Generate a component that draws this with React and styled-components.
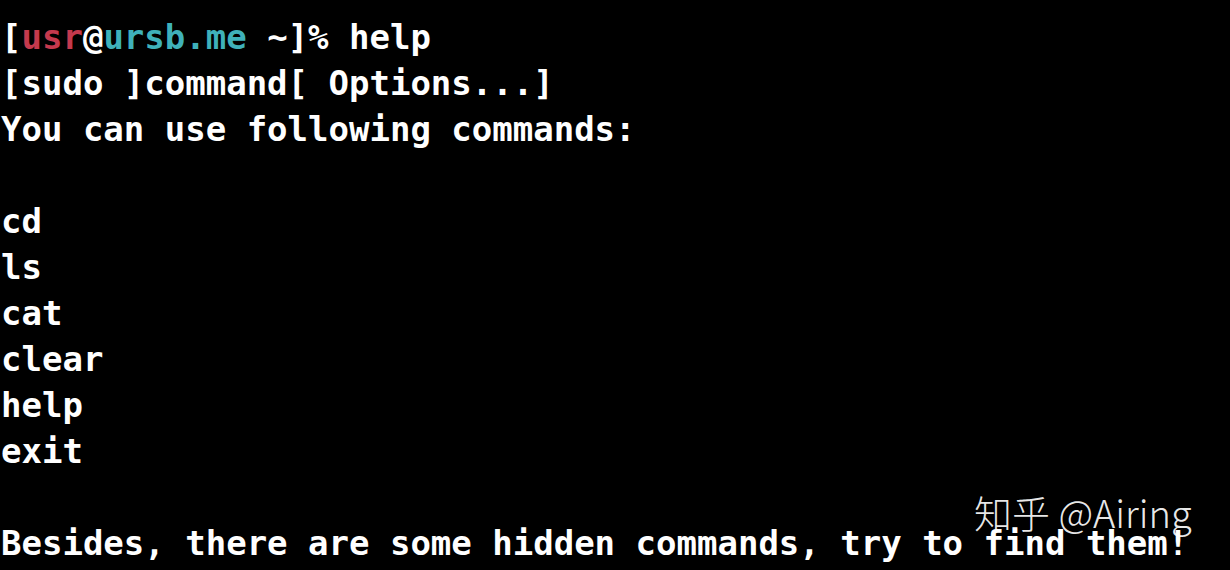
import React from "react";
import styled, {createGlobalStyle} from "styled-components";

const GlobalStyle = createGlobalStyle`
  html, body {
    margin: 0;
    padding: 0;
    background: #000;
  }
`

const Screen = styled.div`
  position: relative;
  width: 1230px;
  height: 570px;
  overflow: hidden;
  background: #000;
  box-sizing: border-box;
  padding: 14px 0 0 1px;
`

const Line = styled.div`
  font-family: "DejaVu Sans Mono", "Liberation Mono", monospace;
  font-weight: bold;
  font-size: 34px;
  line-height: 46px;
  height: 46px;
  color: #fff;
  white-space: pre;
`

const User = styled.span`
  color: #c5394d;
`

const Host = styled.span`
  color: #3fb1ba;
`

const Watermark = styled.div`
  position: absolute;
  left: 974px;
  top: 485px;
  font-family: "Noto Sans CJK SC", "Noto Sans", sans-serif;
  font-weight: 300;
  font-size: 38px;
  line-height: 54px;
  color: rgba(255, 255, 255, 0.92);
  white-space: pre;
`

const commands = ["cd", "ls", "cat", "clear", "help", "exit"];

const App = () => {
    return (
      <Screen>
          <GlobalStyle/>
          <Line>[<User>usr</User>@<Host>ursb.me</Host> ~]% help</Line>
          <Line>[sudo ]command[ Options...]</Line>
          <Line>You can use following commands:</Line>
          <Line> </Line>
          {commands.map(c => <Line key={c}>{c}</Line>)}
          <Line> </Line>
          <Line>Besides, there are some hidden commands, try to find them!</Line>
          <Watermark>知乎 @Airing</Watermark>
      </Screen>
    );
}

export default App;
